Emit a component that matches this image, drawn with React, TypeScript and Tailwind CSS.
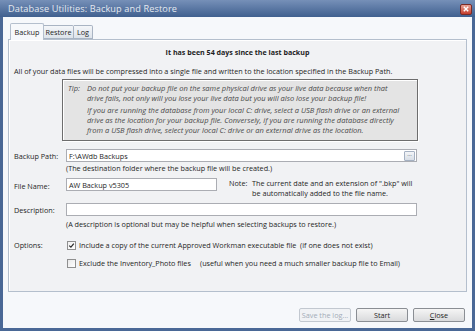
export default function App() {
  const font = { fontFamily: '"Open Sans", "Noto Sans", sans-serif' };
  return (
    <div className="w-[475px] h-[331px] bg-[#4a6896] flex flex-col text-[7.25px] leading-[10px] text-[#1e1e1e]" style={font}>
      {/* title bar */}
      <div className="h-[17px] flex items-center justify-between pl-[8px] pr-[3px] bg-gradient-to-b from-[#7690b8] to-[#40608f]">
        <span className="text-[9.2px] text-[#e4e9f0] tracking-[0.1px]">Database Utilities: Backup and Restore</span>
        <div className="w-[12px] h-[11px] mt-[1px] rounded-[2px] border border-[#7a2b25] bg-gradient-to-b from-[#e8a094] to-[#c43b2c] flex items-center justify-center">
          <svg width="6" height="6" viewBox="0 0 6 6">
            <path d="M0.8 0.8 L5.2 5.2 M5.2 0.8 L0.8 5.2" stroke="#fff" strokeWidth="1.4" />
          </svg>
        </div>
      </div>

      {/* client area */}
      <div className="flex-1 mx-[3px] mb-[3px] bg-[#f6f8fb] flex flex-col px-[5px] pt-[5px]">
        {/* tabs */}
        <div className="flex items-end pl-[2px] h-[17px]">
          <div className="h-[17px] w-[34px] bg-[#f6f8fb] border border-b-0 border-[#b4bfcd] rounded-t-[2px] flex items-center justify-center relative z-10 -mb-px pb-[1px]">
            Backup
          </div>
          <div className="h-[14px] w-[30px] bg-gradient-to-b from-[#f4f6f9] to-[#dde3ea] border border-l-0 border-[#a9b4c3] rounded-tr-[2px] flex items-center justify-center">
            Restore
          </div>
          <div className="h-[14px] w-[19px] bg-gradient-to-b from-[#f4f6f9] to-[#dde3ea] border border-l-0 border-[#a9b4c3] rounded-tr-[2px] flex items-center justify-center">
            Log
          </div>
        </div>

        {/* panel */}
        <div className="h-[253px] border border-[#b4bfcd] bg-[#f1f2f4] shadow-[inset_1px_1px_0_#ffffff] px-[5px] flex flex-col">
          <div className="mt-[7px] text-center font-bold text-[7.1px]">It has been 54 days since the last backup</div>
          <div className="mt-[9px] whitespace-nowrap">
            All of your data files will be compressed into a single file and written to the location specified in the Backup Path.
          </div>

          {/* tip */}
          <div className="ml-[48px] mt-[3px] w-[356px] h-[62px] bg-[#e4e4e4] border border-[#6d6d6d] shadow-[inset_1px_1px_0_#ffffff,1px_1px_0_#ffffff] flex pt-[3px] pl-[5px] italic text-[#4a4a4a] text-[7.5px] whitespace-nowrap">
            <div className="w-[19px] shrink-0">Tip:</div>
            <div className="flex flex-col gap-[2px]">
              <p>
                Do not put your backup file on the same physical drive as your live data because when that
                <br />
                drive fails, not only will you lose your live data but you will also lose your backup file!
              </p>
              <p>
                If you are running the database from your local C: drive, select a USB flash drive or an external
                <br />
                drive as the location for your backup file. Conversely, if you are running the database directly
                <br />
                from a USB flash drive, select your local C: drive or an external drive as the location.
              </p>
            </div>
          </div>

          {/* backup path */}
          <div className="flex items-center mt-[8px]">
            <div className="w-[52px]">Backup Path:</div>
            <div className="w-[351px] h-[13px] border border-[#abadb3] bg-white flex items-center justify-between pl-[2px] pr-px">
              <span>F:\AWdb Backups</span>
              <div className="w-[11px] h-[10px] rounded-[1px] border border-[#a5b1c2] bg-gradient-to-b from-[#f3f5f8] to-[#d8dee6] flex items-start justify-center text-[6px] leading-[5px] text-[#555]">
                ...
              </div>
            </div>
          </div>
          <div className="ml-[52px] mt-[1px]">(The destination folder where the backup file will be created.)</div>

          {/* file name */}
          <div className="flex mt-[5px]">
            <div className="w-[52px] pt-[3px]">File Name:</div>
            <div className="w-[151px] h-[13px] border border-[#abadb3] bg-white flex items-center pl-[2px]">AW Backup v5305</div>
            <div className="ml-[12px] flex">
              <span className="w-[23px]">Note:</span>
              <span>
                The current date and an extension of ".bkp" will
                <br />
                be automatically added to the file name.
              </span>
            </div>
          </div>

          {/* description */}
          <div className="flex items-center mt-[5px]">
            <div className="w-[52px]">Description:</div>
            <div className="w-[351px] h-[13px] border border-[#abadb3] bg-white" />
          </div>
          <div className="ml-[52px] mt-[3px]">(A description is optional but may be helpful when selecting backups to restore.)</div>

          {/* options */}
          <div className="flex items-center mt-[11px]">
            <div className="w-[53px]">Options:</div>
            <div className="w-[9px] h-[9px] border border-[#8f8f8f] bg-gradient-to-br from-[#f0f0f0] to-white flex items-center justify-center">
              <svg width="7" height="7" viewBox="0 0 7 7">
                <path d="M1.2 3.6 L2.9 5.2 L5.8 1.6" stroke="#2a2a2a" strokeWidth="1.2" fill="none" />
              </svg>
            </div>
            <span className="ml-[3px] whitespace-pre">Include a copy of the current Approved Workman executable file  (if one does not exist)</span>
          </div>
          <div className="flex items-center mt-[8px]">
            <div className="w-[53px]" />
            <div className="w-[9px] h-[9px] border border-[#8f8f8f] bg-gradient-to-br from-[#e8e8e8] to-white" />
            <span className="ml-[3px] w-[121px]">Exclude the Inventory_Photo files</span>
            <span>(useful when you need a much smaller backup file to Email)</span>
          </div>
        </div>

        {/* buttons */}
        <div className="flex justify-end gap-[5px] mt-[16px] pr-[2px]">
          <div className="w-[52px] h-[14px] rounded-[2px] border border-[#c2c8d0] bg-[#f0f2f5] flex items-center justify-center text-[#a3acb8]">
            Save the log...
          </div>
          <div className="w-[52px] h-[14px] rounded-[2px] border border-[#8a8e94] bg-gradient-to-b from-[#f5f5f5] to-[#d9dadc] flex items-center justify-center">
            Start
          </div>
          <div className="w-[52px] h-[14px] rounded-[2px] border border-[#8a8e94] bg-gradient-to-b from-[#f5f5f5] to-[#d9dadc] flex items-center justify-center">
            <span><span className="underline">C</span>lose</span>
          </div>
        </div>
      </div>
    </div>
  );
}
